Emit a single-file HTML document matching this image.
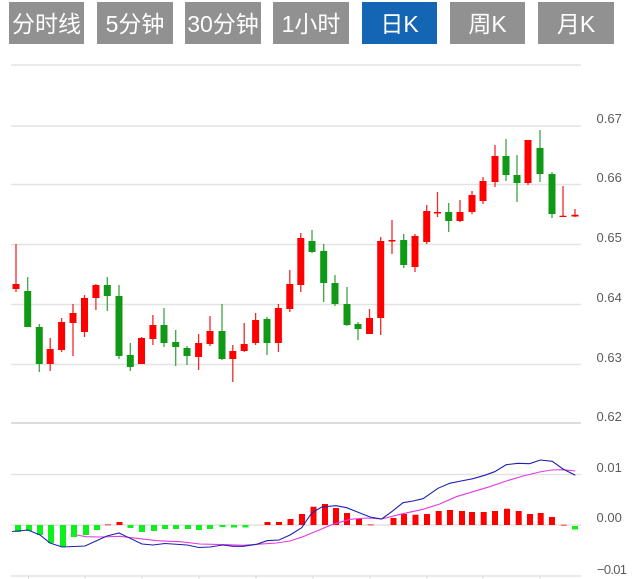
<!DOCTYPE html>
<html><head><meta charset="utf-8">
<style>
html,body{margin:0;padding:0;background:#fff;width:643px;height:579px;overflow:hidden}
svg{position:absolute;left:0;top:0}
.b{position:absolute;top:2px;height:42px;background:#919191;color:#fff;font:23px/44px "Liberation Sans","Noto Sans CJK SC",sans-serif;text-align:center;white-space:nowrap;overflow:hidden}
.a{background:#1565b5}
</style></head>
<body>
<div class="b" style="left:9px;width:75px">分时线</div>
<div class="b" style="left:97px;width:76px">5分钟</div>
<div class="b" style="left:185px;width:76px">30分钟</div>
<div class="b" style="left:273px;width:76px">1小时</div>
<div class="b a" style="left:362px;width:75px">日K</div>
<div class="b" style="left:450px;width:75px">周K</div>
<div class="b" style="left:538px;width:76px">月K</div>
<svg width="643" height="579" viewBox="0 0 643 579" font-family="'Liberation Sans',sans-serif" font-size="13" fill="#5c5c5c">
<path fill="none" stroke="#e3e3e3" stroke-width="1.4" d="M11 65H581M11 126H581M11 184.500H581M11 244.500H581M11 304.500H581M11 364.500H581M11 474.500H581M11 525H581M11 576H581"/>
<path fill="none" stroke="#dcdcdc" stroke-width="2" d="M11 423H581"/>
<path fill="none" stroke="#d5dde5" stroke-width="1" d="M28.500 576V579M85 576V579M142 576V579M199 576V579M256 576V579M313 576V579M370 576V579M427 576V579M483 576V579M540 576V579"/>
<g text-anchor="start">
<text x="596.500" y="123">0.67</text><text x="596.500" y="182">0.66</text><text x="596.500" y="242">0.65</text><text x="596.500" y="302">0.64</text><text x="596.500" y="362">0.63</text><text x="596.500" y="421">0.62</text>
<text x="596.500" y="472">0.01</text><text x="596.500" y="522">0.00</text><text x="597" y="574" textLength="30">−0.01</text>
</g>
<!-- red wicks -->
<path fill="none" stroke="#f02a2a" stroke-width="1.3" d="M16 244V292M50.200 338V371M61.600 318V352M73 304V356M84.500 295V337M95.900 284V310M141.500 337V364M152.900 315V345M198.600 334V370M210 316V346M232.800 345V382M244.200 323V352M255.600 313V345M278.400 304V352M289.800 270V312M300.800 233V292M369.500 309V334M380.700 237V335M392 220V254M415 234V272M426.700 205V244M437.500 192V217M460 200V222M472 191V214M483 177V204M495 145V187M528 140V185M563 186V217M575 209V217"/>
<!-- red bodies -->
<path fill="none" stroke="#ff0000" stroke-width="7" d="M16 284V289M50.200 349V364M61.600 322V350M73 313V323M84.500 298V332M95.900 285V298M141.500 338V364M152.900 325V339M198.600 343V357M210 331V344M232.800 351V359M244.200 344V351M255.600 320V343M278.400 308V343M289.800 284V309M300.800 238V285M369.500 318V334M380.700 241V318M392 240V241.500M415 236V267M426.700 211V242M437.500 212V213.500M460 212V221M472 195V212M483 181V201M495 156V182M528 140V183M563 215.700V217M575 214.700V216.500"/>
<!-- green wicks -->
<path fill="none" stroke="#3ea542" stroke-width="1.3" d="M27.700 277V327M39.300 324V372M107.300 277V311M119 285V359M130.300 343V371M164 308V347M175.700 330V366M187 346V365M222 304V360M267 317V355M312 230V253M323.700 244V302M335 275V306M347 287V326M358 322V340M403.700 234V268M448.700 203V232M506 139V181M517 155V202M540 130V182M552 172V218"/>
<!-- green bodies -->
<path fill="none" stroke="#0f9915" stroke-width="7" d="M27.700 291V327M39.300 327V364M107.300 285V296M119 296V356M130.300 355V367M164 325V343M175.700 342V347M187 348V356M222 331V359M267 319V343M312 241V252M323.700 251V283M335 283V304M347 304V325M358 324V329M403.700 240V265M448.700 212V221M506 156V175M517 175V183M540 148V174M552 174V214"/>
<!-- MACD bars green -->
<path fill="none" stroke="#0cf01c" stroke-width="6" d="M18 525V532M29 525V531M40 525V535M51 525V543M63 525V547M74 525V537M86 525V535M97 525V530M130.500 525V528M142 525V532M154 525V531M165 525V529M176 525V529M188 525V529M199 525V530M210 525V529M222.500 525V527M234 525V527.500M245.500 525V527.500M575 526V529.500"/>
<!-- MACD bars red -->
<path fill="none" stroke="#ff0000" stroke-width="6" d="M119.500 522V525M267.500 522V525M279 522V525M290.500 519V525M302 514V525M313.500 506.700V525M325 504V525M336 508V525M347 513V525M359 519V525M393.500 518V525M404 514V525M415.500 514.700V525M427 514V525M438.700 511V525M450 510V525M462 511V525M472 512V525M483.700 512V525M495 511V525M507 508.700V525M518.700 511V525M530 514V525M540.700 513V525M552 517V525"/>
<path fill="none" stroke="#ec6b6b" stroke-width="6" stroke-opacity=".9" d="M108 524V525.500M370.700 524V525.500M563.700 524.500V526"/>
<!-- DEA -->
<polyline fill="none" stroke="#e23be2" stroke-width="1.100" points="76.700,535 86,536.700 100,537 120,536.300 140,538.700 156.700,540.700 180,541.700 200,544 226.700,544.700 243,545.300 256.700,544.300 276.700,543 290,541 303,536.700 316.700,531 333,524.300 350,519.300 366.700,518 381.700,519 400,514.300 423,509.300 439.700,504 456.300,496.700 489.700,486.700 506.300,481 523,476 539.700,472 551.300,470 563,469.700 575.300,471"/>
<!-- DIF -->
<polyline fill="none" stroke="#2020b0" stroke-width="1.100" points="12,531.500 28,530 40,535 50,543 62,547 85,546 107,536 119,533 142,544 153,545 165,543.500 187,545 199,547.500 210,547 222.700,545 233,546.300 243,546.300 256.700,544.300 267,540.700 279,540 290,535 301.700,527.700 311.700,513 321.700,507 336,505.700 346.700,507.700 360,513 370,517 381.700,519 391.700,511.700 403,502.700 413,501 423,498.700 438,488.300 449.700,483.300 461,481 473,478.700 484.700,475.300 494.700,471.700 506.300,464.700 518,463.300 529.700,463.700 540.300,460 552.300,461.300 563,469 575.300,475.300"/>
</svg>
</body></html>
